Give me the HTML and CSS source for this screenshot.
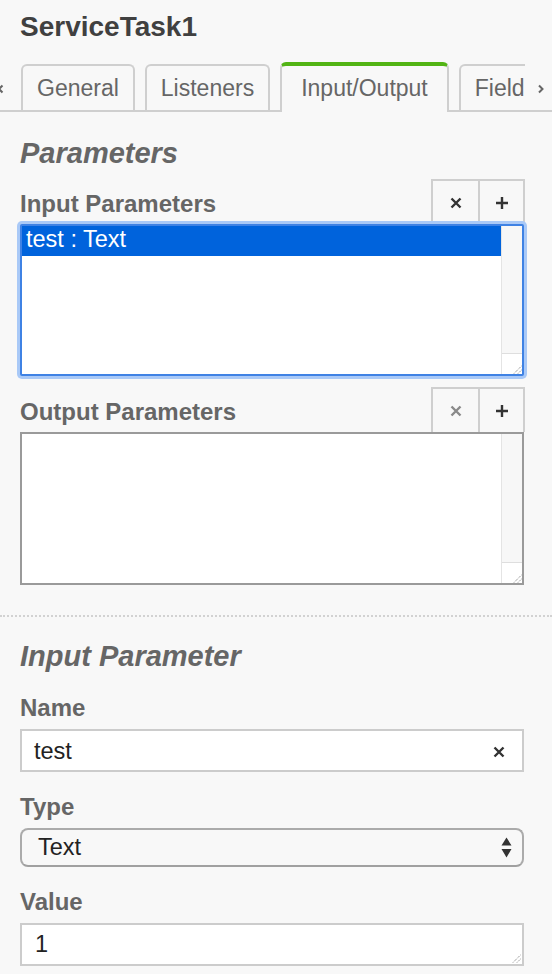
FILE: index.html
```html
<!DOCTYPE html>
<html lang="en">
<head>
<meta charset="utf-8">
<title>ServiceTask1</title>
<link rel="stylesheet" href="styles.css">
</head>
<body>
<div class="panel">
  <div class="header">
    <div class="title">ServiceTask1</div>
  </div>

  <div class="tabbar">
    <span class="scroll scroll-left"><svg width="8" height="10" viewBox="0 0 8 10"><path d="M5.5 1.5 L2 5 L5.5 8.5" fill="none" stroke="#666" stroke-width="2"/></svg></span>
    <div class="tabs">
      <div class="tab">General</div>
      <div class="tab">Listeners</div>
      <div class="tab active">Input/Output</div>
      <div class="tab">Field</div>
    </div>
    <span class="scroll scroll-right"><svg width="8" height="10" viewBox="0 0 8 10"><path d="M2 1.5 L5.5 5 L2 8.5" fill="none" stroke="#666" stroke-width="2"/></svg></span>
  </div>

  <div class="section">
    <h2 class="heading">Parameters</h2>

    <div class="list-head">
      <div class="label">Input Parameters</div>
      <div class="btns">
        <div class="btn"><svg width="12" height="12" viewBox="0 0 12 12"><path d="M1.5 1.5 L10.5 10.5 M10.5 1.5 L1.5 10.5" stroke="#333" stroke-width="2.4"/></svg></div>
        <div class="btn"><svg width="14" height="14" viewBox="0 0 14 14"><path d="M7 1 V13 M1 7 H13" stroke="#333" stroke-width="2.4"/></svg></div>
      </div>
    </div>
    <div class="listbox focused">
      <div class="list-items">
        <div class="list-item selected">test : Text</div>
      </div>
      <div class="vscroll">
        <div class="corner"><svg width="10" height="10" viewBox="0 0 10 10"><path d="M2 9.5 L9.5 2 M6 9.5 L9.5 6" stroke="#666" stroke-width="0.9" stroke-dasharray="1 1"/></svg></div>
      </div>
    </div>

    <div class="list-head second">
      <div class="label">Output Parameters</div>
      <div class="btns">
        <div class="btn"><svg width="12" height="12" viewBox="0 0 12 12"><path d="M1.5 1.5 L10.5 10.5 M10.5 1.5 L1.5 10.5" stroke="#8a8a8a" stroke-width="2.4"/></svg></div>
        <div class="btn"><svg width="14" height="14" viewBox="0 0 14 14"><path d="M7 1 V13 M1 7 H13" stroke="#333" stroke-width="2.4"/></svg></div>
      </div>
    </div>
    <div class="listbox plain">
      <div class="list-items"></div>
      <div class="vscroll">
        <div class="corner"><svg width="10" height="10" viewBox="0 0 10 10"><path d="M2 9.5 L9.5 2 M6 9.5 L9.5 6" stroke="#666" stroke-width="0.9" stroke-dasharray="1 1"/></svg></div>
      </div>
    </div>
  </div>

  <div class="separator"></div>

  <div class="section">
    <h2 class="heading heading-two">Input Parameter</h2>

    <div class="field">
      <div class="label">Name</div>
      <div class="textbox">
        <span class="value">test</span>
        <span class="clear"><svg width="12" height="12" viewBox="0 0 12 12"><path d="M1.5 1.5 L10.5 10.5 M10.5 1.5 L1.5 10.5" stroke="#333" stroke-width="2.4"/></svg></span>
      </div>
    </div>

    <div class="field">
      <div class="label">Type</div>
      <div class="selectbox">
        <span class="value">Text</span>
        <span class="arrows"><svg width="11" height="21" viewBox="0 0 11 21"><path d="M5.5 0.5 L10.5 8.5 H0.5 Z M0.5 12 H10.5 L5.5 20.5 Z" fill="#333"/></svg></span>
      </div>
    </div>

    <div class="field">
      <div class="label">Value</div>
      <div class="textbox area">
        <span class="value">1</span>
        <span class="grip"><svg width="10" height="10" viewBox="0 0 10 10"><path d="M2 9.5 L9.5 2 M6 9.5 L9.5 6" stroke="#666" stroke-width="0.9" stroke-dasharray="1 1"/></svg></span>
      </div>
    </div>
  </div>
</div>
</body>
</html>
```

FILE: styles.css
```css
html, body {
  margin: 0;
  padding: 0;
  background: #f8f8f8;
}

body {
  font-family: "Liberation Sans", Arial, sans-serif;
  color: #666;
  width: 552px;
  height: 974px;
  overflow: hidden;
}

.header {
  padding: 12px 20px 0 20px;
}

.title {
  font-size: 28px;
  line-height: 30px;
  font-weight: bold;
  color: #404040;
}

/* tabs */
.tabbar {
  position: relative;
  margin-top: 20px;
  height: 50px;
  background: linear-gradient(#cfcfcf, #cfcfcf) left bottom / 100% 2px no-repeat;
}

.tabs {
  display: flex;
  align-items: flex-end;
  gap: 10px;
  margin: 0 27px 0 21px;
  height: 50px;
  overflow: hidden;
}

.tab {
  flex: none;
  box-sizing: border-box;
  height: 46px;
  margin-bottom: 2px;
  padding: 0 14px;
  border: 2px solid #cfcfcf;
  border-bottom: none;
  border-radius: 6px 6px 0 0;
  font-size: 23px;
  line-height: 44px;
  color: #666;
  white-space: nowrap;
}

.tab.active {
  height: 50px;
  margin-bottom: 0;
  padding: 0 19px 2px 19px;
  border-top: 4px solid #52b415;
  background: #f8f8f8;
}

.scroll {
  position: absolute;
  top: 22px;
  display: block;
  line-height: 0;
}

.scroll-left {
  left: -3px;
}

.scroll-right {
  left: 537px;
}

/* sections */
.section {
  padding: 0 28px 0 20px;
}

.heading {
  margin: 25px 0 0 0;
  font-size: 29px;
  line-height: 32px;
  font-weight: bold;
  font-style: italic;
  color: #666;
}

.heading-two {
  margin-top: 23px;
}

.label {
  font-size: 24px;
  line-height: 26px;
  font-weight: bold;
  color: #666;
}

.list-head {
  display: flex;
  align-items: flex-end;
  justify-content: space-between;
  margin-top: 10px;
  height: 45px;
}

.list-head .label {
  margin-bottom: 7px;
}

.list-head.second {
  margin-top: 11px;
}

.btns {
  display: flex;
  margin-right: -1px;
  margin-left: auto;
}

.btn {
  box-sizing: border-box;
  width: 47px;
  height: 45px;
  border: 2px solid #cfcfcf;
  border-bottom: none;
  border-right: none;
  display: flex;
  align-items: center;
  justify-content: center;
  background: #f8f8f8;
}

.btn:last-child {
  border-right: 2px solid #cfcfcf;
}

.listbox {
  box-sizing: border-box;
  height: 152px;
  display: flex;
  background: #fff;
  position: relative;
}

.listbox.focused {
  border: 2px solid #3f82e4;
  box-shadow: 0 0 0 3px #a9c9f7;
  border-radius: 2px;
}

.listbox.plain {
  height: 153px;
  border: 2px solid #9a9a9a;
}

.list-items {
  flex: 1;
}

.list-item {
  font-size: 23.5px;
  line-height: 27px;
  padding: 0 0 3px 4px;
  color: #222;
}

.list-item.selected {
  background: #0063dc;
  color: #fff;
}

.vscroll {
  width: 21px;
  box-sizing: border-box;
  border-left: 1px solid #e4e4e4;
  background: #f7f7f7;
  display: flex;
  flex-direction: column;
  justify-content: flex-end;
}

.corner {
  height: 21px;
  box-sizing: border-box;
  border-top: 1px solid #dedede;
  background: #fff;
  display: flex;
  align-items: flex-end;
  justify-content: flex-end;
  line-height: 0;
}

.separator {
  margin-top: 30px;
  border-top: 2px dotted #d2d2d2;
}

/* fields */
.field {
  margin-top: 23px;
}

.field + .field {
  margin-top: 22px;
}

.field .label {
  margin-bottom: 8px;
}

.textbox {
  box-sizing: border-box;
  height: 43px;
  border: 2px solid #cccccc;
  background: #fff;
  display: flex;
  align-items: center;
  padding: 0 17px 0 12px;
  position: relative;
}

.textbox .value,
.selectbox .value {
  flex: 1;
  font-size: 23.5px;
  line-height: 38px;
  color: #222;
}

.clear {
  line-height: 0;
  margin-top: 2px;
}

.textbox.area {
  height: 43px;
  padding-left: 13px;
  align-items: flex-start;
}

.grip {
  position: absolute;
  right: 1px;
  bottom: 1px;
  line-height: 0;
}

.selectbox {
  box-sizing: border-box;
  height: 39px;
  border: 2px solid #ababab;
  border-bottom-color: #a0a0a0;
  border-radius: 8px;
  background: #f8f8f8;
  display: flex;
  align-items: center;
  padding: 0 10px 0 16px;
}

.selectbox .value {
  line-height: 35px;
}

.arrows {
  line-height: 0;
}
```
